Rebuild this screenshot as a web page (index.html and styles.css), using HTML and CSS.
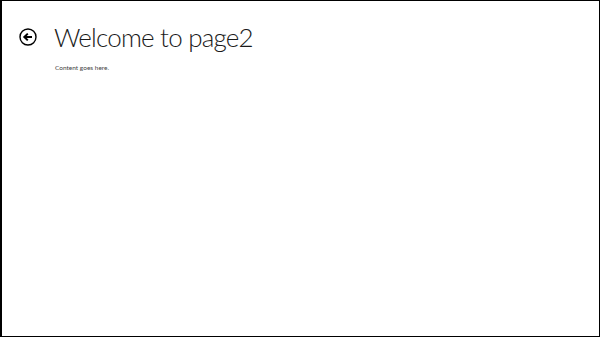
FILE: index.html
```html
<!DOCTYPE html>
<html lang="en">
  <head>
    <meta charset="UTF-8" />
    <title>page2</title>
    <link rel="stylesheet" href="styles.css">
  </head>
  <body>
    <div class="page">
      <header class="page-header">
        <button class="back-button" aria-label="Back">
          <svg width="18" height="18" viewBox="0 0 18 18">
            <circle cx="9" cy="9" r="8" fill="none" stroke="#000" stroke-width="1.4" />
            <path d="M13 9H5.5M8.8 5.6L5.3 9l3.5 3.4" fill="none" stroke="#000" stroke-width="2" />
          </svg>
        </button>
        <h1 class="page-title">Welcome to page2</h1>
      </header>
      <section class="content">
        <p>Content goes here.</p>
      </section>
    </div>
  </body>
</html>
```

FILE: styles.css
```css
* {
  box-sizing: border-box;
}
body {
  margin: 0;
  background-color: white;
  font-family: Lato, "Open Sans", sans-serif;
}
.page {
  height: 337px;
  width: 600px;
  border: 1px solid black;
  border-left-width: 2px;
  background-color: white;
}
.page-header {
  display: flex;
  align-items: center;
  padding: 20px 0 0 16px;
}
.back-button {
  width: 20px;
  height: 20px;
  padding: 0;
  margin: 0 16px 0 0;
  border: none;
  background: none;
  display: flex;
  align-items: center;
  justify-content: center;
}
.page-title {
  margin: 0;
  font-size: 26px;
  font-weight: 300;
  letter-spacing: -0.8px;
  color: #1a1a1a;
  line-height: 32px;
}
.content {
  padding: 11px 0 0 53px;
}
.content p {
  margin: 0;
  font-size: 6.5px;
  color: #444;
}
```
